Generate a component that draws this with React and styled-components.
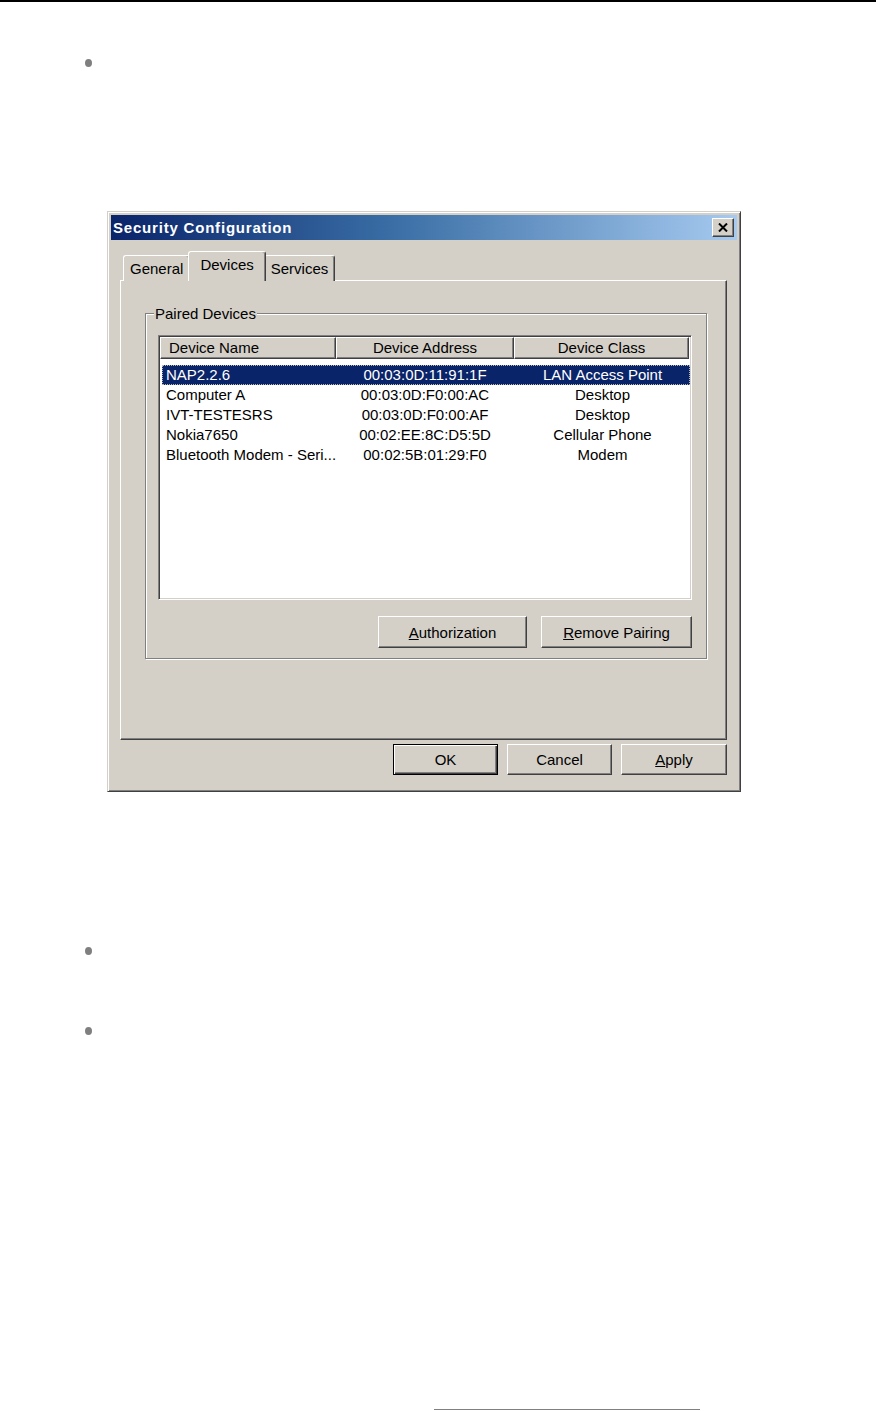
import styled, { createGlobalStyle } from 'styled-components'

const Global = createGlobalStyle`
  html, body {
    margin: 0;
    padding: 0;
    background: #fff;
  }
  body {
    font-family: "Liberation Sans", Arial, sans-serif;
  }
`

const Page = styled.div`
  width: 882px;
  height: 1411px;
  display: flex;
  flex-direction: column;
  background: #fff;
  overflow: hidden;
`

const TopRule = styled.div`
  width: 876px;
  height: 2px;
  background: #000;
  flex-shrink: 0;
`

const Bullet = styled.div`
  width: 7px;
  height: 8px;
  border-radius: 50%;
  background: #7f7f7f;
  margin-left: 85px;
  margin-top: ${p => p.$top}px;
  flex-shrink: 0;
`

const BottomRule = styled.div`
  width: 266px;
  height: 1px;
  background: #808080;
  margin-left: 434px;
  margin-top: ${p => p.$top}px;
  flex-shrink: 0;
`

const Dialog = styled.div`
  box-sizing: border-box;
  width: 634px;
  height: 581px;
  margin-left: 107px;
  margin-top: ${p => p.$top}px;
  background: #d4d0c8;
  border: 1px solid;
  border-color: #d4d0c8 #404040 #404040 #d4d0c8;
  box-shadow: inset 1px 1px #fff, inset -1px -1px #808080;
  padding: 3px;
  flex-shrink: 0;
  font-size: 15px;
  color: #000;
`

const TitleBar = styled.div`
  height: 25px;
  background: linear-gradient(to right, #0a246a 0%, #3a6ea5 45%, #a6caf0 100%);
  display: flex;
  align-items: center;
  justify-content: space-between;
  padding: 0 3px 0 2px;
`

const Title = styled.span`
  color: #fff;
  font-weight: bold;
  font-size: 15px;
  letter-spacing: 0.8px;
`

const CloseBtn = styled.div`
  box-sizing: border-box;
  width: 22px;
  height: 19px;
  background: #d4d0c8;
  border: 1px solid;
  border-color: #fff #404040 #404040 #fff;
  box-shadow: inset -1px -1px #808080;
  display: flex;
  align-items: center;
  justify-content: center;
`

const Body = styled.div`
  padding: 12px 10px 0 9px;
`

const TabsRow = styled.div`
  display: flex;
  align-items: flex-end;
  height: 29px;
  padding-left: 3px;
  position: relative;
  z-index: 1;
  margin-bottom: -1px;
`

const Tab = styled.div`
  box-sizing: border-box;
  height: ${p => (p.$active ? 30 : 26)}px;
  padding: ${p => (p.$active ? '3px 11px 0' : '3px 6px 0')};
  margin: ${p => (p.$active ? '0 -2px' : '0')};
  position: relative;
  z-index: ${p => (p.$active ? 2 : 1)};
  background: #d4d0c8;
  border: 1px solid;
  border-bottom: none;
  border-color: #fff #404040 #404040 #fff;
  border-radius: 3px 3px 0 0;
  box-shadow: inset -1px 0 #808080;
  line-height: 20px;
`

const Panel = styled.div`
  box-sizing: border-box;
  height: 460px;
  border: 1px solid;
  border-color: #fff #404040 #404040 #fff;
  box-shadow: inset -1px -1px #808080;
  padding-top: 24px;
`

const Group = styled.fieldset`
  margin: 0 19px 0 24px;
  padding: 13px 14px 10px 12px;
  border: 1px solid #808080;
  box-shadow: inset 1px 1px #fff, 1px 1px #fff;
  min-width: 0;
`

const Legend = styled.legend`
  padding: 0 1px;
  margin-left: -4px;
  background: #d4d0c8;
  line-height: 17px;
`

const List = styled.div`
  box-sizing: border-box;
  height: 265px;
  background: #fff;
  border: 1px solid;
  border-color: #808080 #fff #fff #808080;
  box-shadow: inset 1px 1px #404040, inset -1px -1px #d4d0c8;
  padding: 1px;
`

const Header = styled.div`
  display: grid;
  grid-template-columns: 176px 178px 175px;
  height: 22px;
`

const HeadCell = styled.div`
  box-sizing: border-box;
  background: #d4d0c8;
  border: 1px solid;
  border-color: #fff #404040 #404040 #fff;
  box-shadow: inset -1px -1px #808080;
  line-height: 20px;
  text-align: ${p => (p.$left ? 'left' : 'center')};
  padding-left: ${p => (p.$left ? '8px' : '0')};
`

const Rows = styled.div`
  padding: 6px 0 0 2px;
`

const Row = styled.div`
  display: grid;
  grid-template-columns: 174px 178px 177px;
  height: 20px;
  line-height: 20px;
  background: ${p => (p.$selected ? '#0a246a' : 'transparent')};
  color: ${p => (p.$selected ? '#fff' : '#000')};
  outline: ${p => (p.$selected ? '1px dotted #b8b8b8' : 'none')};
  outline-offset: -1px;
`

const Cell = styled.div`
  white-space: nowrap;
  overflow: hidden;
  text-align: ${p => (p.$left ? 'left' : 'center')};
  padding-left: ${p => (p.$left ? '4px' : '0')};
`

const ButtonRow = styled.div`
  display: flex;
  justify-content: flex-end;
  gap: ${p => p.$gap}px;
  margin-top: ${p => p.$top}px;
`

const Button = styled.button`
  box-sizing: border-box;
  width: ${p => p.$w}px;
  height: ${p => p.$h}px;
  background: #d4d0c8;
  font-family: "Liberation Sans", Arial, sans-serif;
  font-size: 15px;
  color: #000;
  padding: 0;
  border: 1px solid;
  border-color: ${p => (p.$default ? '#000' : '#fff #404040 #404040 #fff')};
  box-shadow: ${p =>
    p.$default
      ? 'inset 1px 1px #fff, inset -1px -1px #404040, inset -2px -2px #808080'
      : 'inset -1px -1px #808080'};
`

const devices = [
  ['NAP2.2.6', '00:03:0D:11:91:1F', 'LAN Access Point'],
  ['Computer A', '00:03:0D:F0:00:AC', 'Desktop'],
  ['IVT-TESTESRS', '00:03:0D:F0:00:AF', 'Desktop'],
  ['Nokia7650', '00:02:EE:8C:D5:5D', 'Cellular Phone'],
  ['Bluetooth Modem - Seri...', '00:02:5B:01:29:F0', 'Modem'],
]

export default function App() {
  return (
    <>
      <Global />
      <Page>
        <TopRule />
        <Bullet $top={57} />
        <Dialog $top={144}>
          <TitleBar>
            <Title>Security Configuration</Title>
            <CloseBtn>
              <svg width="10" height="9" viewBox="0 0 10 9">
                <path d="M1 0.5 L9 8.5 M9 0.5 L1 8.5" stroke="#000" strokeWidth="2" />
              </svg>
            </CloseBtn>
          </TitleBar>
          <Body>
            <TabsRow>
              <Tab>General</Tab>
              <Tab $active>Devices</Tab>
              <Tab>Services</Tab>
            </TabsRow>
            <Panel>
              <Group>
                <Legend>Paired Devices</Legend>
                <List>
                  <Header>
                    <HeadCell $left>Device Name</HeadCell>
                    <HeadCell>Device Address</HeadCell>
                    <HeadCell>Device Class</HeadCell>
                  </Header>
                  <Rows>
                    {devices.map((d, i) => (
                      <Row key={d[1]} $selected={i === 0}>
                        <Cell $left>{d[0]}</Cell>
                        <Cell>{d[1]}</Cell>
                        <Cell>{d[2]}</Cell>
                      </Row>
                    ))}
                  </Rows>
                </List>
                <ButtonRow $gap={14} $top={16}>
                  <Button $w={149} $h={32}><u>A</u>uthorization</Button>
                  <Button $w={151} $h={32}><u>R</u>emove Pairing</Button>
                </ButtonRow>
              </Group>
            </Panel>
            <ButtonRow $gap={9} $top={4}>
              <Button $w={105} $h={31} $default>OK</Button>
              <Button $w={105} $h={31}>Cancel</Button>
              <Button $w={106} $h={31}><u>A</u>pply</Button>
            </ButtonRow>
          </Body>
        </Dialog>
        <Bullet $top={155} />
        <Bullet $top={72} />
        <BottomRule $top={374} />
      </Page>
    </>
  )
}
